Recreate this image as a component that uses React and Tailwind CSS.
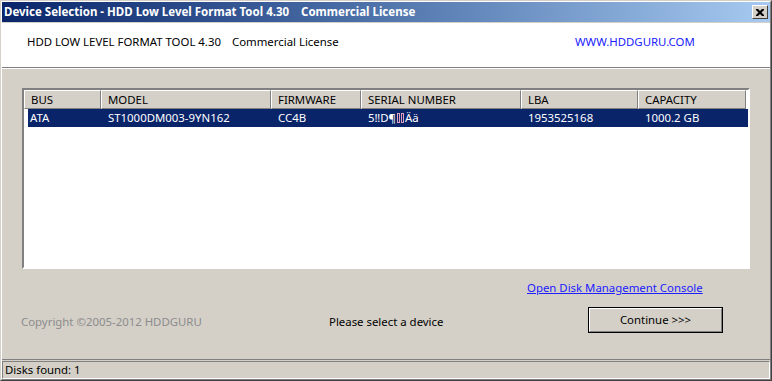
import React from "react";

const F = "font-['Noto_Sans',sans-serif]";

const cols = [
  { name: "BUS", w: "w-[77px]" },
  { name: "MODEL", w: "w-[170px]" },
  { name: "FIRMWARE", w: "w-[90px]" },
  { name: "SERIAL NUMBER", w: "w-[160px]" },
  { name: "LBA", w: "w-[117px]" },
  { name: "CAPACITY", w: "w-[108px]" },
];

export default function App() {
  return (
    <div className={`w-[772px] h-[381px] ${F} text-[11.4px] text-black border border-t-[#d4d0c8] border-l-[#d4d0c8] border-r-[#404040] border-b-[#404040] bg-[#d4d0c8] overflow-hidden`}>
      <div className="w-full h-full flex flex-col border border-t-white border-l-white border-r-[#808080] border-b-[#808080]">
        {/* Title bar */}
        <div className="h-[20px] flex items-center bg-linear-to-r from-[#0a246a] to-[#a6caf0] pl-[2px] pr-[2px]">
          <span className="text-white font-bold text-[11.5px] leading-none whitespace-pre">
            {"Device Selection - HDD Low Level Format Tool 4.30    Commercial License"}
          </span>
          <div className="ml-auto w-[16px] h-[14px] bg-[#d4d0c8] border border-t-white border-l-white border-r-[#404040] border-b-[#404040] flex items-center justify-center">
            <svg width="8" height="7" viewBox="0 0 8 7">
              <path d="M0 0h2l2 2 2-2h2v1l-2.5 2.5L8 6v1H6L4 5 2 7H0V6l2.5-2.5L0 1z" fill="#000" />
            </svg>
          </div>
        </div>
        {/* Header */}
        <div className="mt-[1px] h-[45px] bg-white flex items-center pl-[25px] pb-[6px] border-b border-b-[#808080]">
          <div className="w-[548px] whitespace-pre">
            <span>HDD LOW LEVEL FORMAT TOOL 4.30</span>
            <span className="ml-[11px]">Commercial License</span>
          </div>
          <span className="text-[#2020ff]">WWW.HDDGURU.COM</span>
        </div>
        <div className="h-[1px] bg-white" />
        {/* Body */}
        <div className="flex-1 flex flex-col px-[20px]">
          <div className="mt-[19px] h-[181px] border-2 border-t-[#808080] border-l-[#808080] border-r-white border-b-white bg-white flex flex-col">
            <div className="flex h-[19px]">
              {cols.map((c) => (
                <div
                  key={c.name}
                  className={`${c.w} h-full bg-[#d4d0c8] border border-t-white border-l-white border-r-[#808080] border-b-[#808080] pl-[6px] flex items-center leading-none`}
                >
                  {c.name}
                </div>
              ))}
            </div>
            <div className="ml-[4px] h-[18px] bg-[#0a246a] text-white flex items-center leading-none">
              <div className="w-[80px] pl-[2px]">ATA</div>
              <div className="w-[170px]">ST1000DM003-9YN162</div>
              <div className="w-[90px]">CC4B</div>
              <div className="w-[160px] flex items-center">
                <span>5‼D¶</span>
                <span className="inline-block w-[3px] h-[10px] border border-[#e0a0c0] ml-[1px]" />
                <span className="inline-block w-[3px] h-[10px] border border-[#e0a0c0] ml-[1px] mr-[1px]" />
                <span>Ää</span>
              </div>
              <div className="w-[117px]">1953525168</div>
              <div className="flex-1">1000.2 GB</div>
            </div>
          </div>
          <div className="mt-[11px] h-[16px] pl-[505px] flex items-center">
            <span className="text-[#2020ff] underline whitespace-nowrap">Open Disk Management Console</span>
          </div>
          <div className="mt-[11px] flex items-start -ml-[1px]">
            <div className="w-[308px] pt-[6px] text-[#8c8c8c] whitespace-nowrap">Copyright ©2005-2012 HDDGURU</div>
            <div className="w-[259px] pt-[6px] whitespace-nowrap">Please select a device</div>
            <div className="w-[135px] h-[26px] border border-black">
              <div className="w-full h-full border border-t-white border-l-white border-r-[#808080] border-b-[#808080] flex items-center justify-center">
                Continue &gt;&gt;&gt;
              </div>
            </div>
          </div>
        </div>
        {/* Status bar */}
        <div className="border-t border-t-[#808080] pt-[1px]">
          <div className="h-[18px] border border-t-[#808080] border-l-[#808080] border-r-white border-b-white flex items-center pl-[2px] leading-none">
            Disks found: 1
          </div>
        </div>
      </div>
    </div>
  );
}
